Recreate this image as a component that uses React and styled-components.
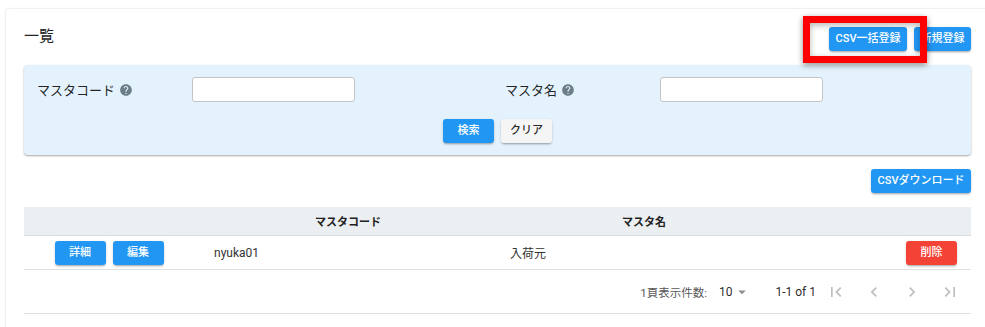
import React from 'react';
import styled, { createGlobalStyle } from 'styled-components';
import {
  MdHelp,
  MdArrowDropDown,
  MdFirstPage,
  MdLastPage,
  MdChevronLeft,
  MdChevronRight
} from 'react-icons/md';

const GlobalStyle = createGlobalStyle`
  html, body {
    margin: 0;
    padding: 0;
    background: #fff;
    overflow: hidden;
  }
  body {
    font-family: Roboto, "Noto Sans CJK JP", sans-serif;
    color: rgba(0, 0, 0, 0.87);
  }
`;

const Card = styled.div`
  margin: 8px 0 0 5px;
  width: 985px;
  min-height: 330px;
  box-sizing: border-box;
  padding: 18px 18px 14px;
  border: 1px solid #f0f0f0;
  border-radius: 4px;
  box-shadow: 0 0 2px rgba(0, 0, 0, 0.06);
  background: #fff;
`;

const TitleRow = styled.div`
  display: flex;
  justify-content: space-between;
  align-items: flex-start;
  height: 24px;
`;

const Title = styled.h2`
  margin: 0;
  font-size: 15px;
  font-weight: 400;
  line-height: 18px;
  color: #222;
`;

const ButtonGroup = styled.div`
  position: relative;
  display: flex;
  gap: 7px;
`;

// red annotation frame drawn over the bulk-upload button
const Highlight = styled.div`
  position: absolute;
  left: -26px;
  top: -11px;
  width: 124px;
  height: 47px;
  box-sizing: border-box;
  border: 7px solid #ff0000;
  box-shadow: 0 2px 6px rgba(0, 0, 0, 0.45), inset 0 2px 6px rgba(0, 0, 0, 0.3);
  pointer-events: none;
`;

const Button = styled.button`
  height: 24px;
  min-width: 51px;
  padding: 0 6.5px;
  border: none;
  border-radius: 3px;
  font-family: Roboto, "Noto Sans CJK JP", sans-serif;
  font-size: 11px;
  font-weight: 500;
  line-height: 24px;
  white-space: nowrap;
  cursor: pointer;
  color: ${p => (p.$variant === 'light' ? 'rgba(0,0,0,0.87)' : '#fff')};
  background: ${p =>
    p.$variant === 'danger' ? '#f44336' : p.$variant === 'light' ? '#f5f5f5' : '#2196f3'};
  box-shadow: 0 2px 2px -1px rgba(0, 0, 0, 0.25), 0 1px 3px rgba(0, 0, 0, 0.15);
`;

const SearchPanel = styled.div`
  margin-top: 14px;
  padding: 12px 0 12px;
  background: #e3f2fd;
  border-radius: 4px;
  box-shadow: 0 1px 2px rgba(0, 0, 0, 0.35);
`;

const FieldGrid = styled.div`
  display: grid;
  grid-template-columns: 468px 1fr;
`;

const Field = styled.div`
  display: flex;
  align-items: center;
  padding-left: 13px;
`;

const Label = styled.div`
  width: 155px;
  display: flex;
  align-items: center;
  gap: 4px;
  font-size: 13px;
  color: rgba(0, 0, 0, 0.87);

  svg {
    color: #6b7d87;
  }
`;

const Input = styled.input`
  width: 163px;
  height: 25px;
  box-sizing: border-box;
  border: 1px solid #c4c4c4;
  border-radius: 3px;
  background: #fff;
  outline: none;
`;

const PanelActions = styled.div`
  margin-top: 17px;
  display: flex;
  justify-content: center;
  gap: 7px;
`;

const DownloadRow = styled.div`
  margin-top: 14px;
  display: flex;
  justify-content: flex-end;
`;

const Table = styled.div`
  margin-top: 14px;
`;

const cols = '176px 296px 296px 1fr';

const HeadRow = styled.div`
  display: grid;
  grid-template-columns: ${cols};
  height: 28px;
  align-items: center;
  background: #eceff1;
  border-bottom: 1px solid #dcdcdc;
  font-size: 11px;
  font-weight: 700;
  color: #222;
`;

const HeadCell = styled.div`
  text-align: center;
`;

const BodyRow = styled.div`
  display: grid;
  grid-template-columns: ${cols};
  height: 33px;
  align-items: center;
  border-bottom: 1px solid #e0e0e0;
  font-size: 12px;
  color: #333;
`;

const Cell = styled.div`
  display: flex;
  gap: 7px;
  padding: ${p => (p.$align === 'center' ? '0 14px 0 8px' : '0 14px')};
  justify-content: ${p => p.$align || 'flex-start'};
`;

const Footer = styled.div`
  height: 43px;
  display: flex;
  align-items: center;
  justify-content: flex-end;
  padding-right: 9px;
  border-bottom: 1px solid #e0e0e0;
  font-size: 12px;
  color: rgba(0, 0, 0, 0.7);
`;

const PerPageLabel = styled.div`
  font-size: 11.5px;
`;

const PerPage = styled.div`
  display: flex;
  align-items: center;
  margin-left: 12px;
  margin-right: 24px;
  color: rgba(0, 0, 0, 0.87);

  svg {
    color: rgba(0, 0, 0, 0.45);
    margin-left: 1px;
  }
`;

const PageInfo = styled.div`
  color: rgba(0, 0, 0, 0.87);
`;

const PageNav = styled.div`
  display: flex;
  gap: 14px;
  margin-left: 8px;
`;

const IconBtn = styled.span`
  width: 24px;
  display: flex;
  justify-content: center;
  color: rgba(0, 0, 0, 0.26);
`;

const rows = [{ code: 'nyuka01', name: '入荷元' }];

export default function App() {
  return (
    <>
      <GlobalStyle />
      <Card>
        <TitleRow>
          <Title>一覧</Title>
          <ButtonGroup>
            <Button>CSV一括登録</Button>
            <Button>新規登録</Button>
            <Highlight />
          </ButtonGroup>
        </TitleRow>

        <SearchPanel>
          <FieldGrid>
            <Field>
              <Label>
                マスタコード <MdHelp size={14} />
              </Label>
              <Input />
            </Field>
            <Field>
              <Label>
                マスタ名 <MdHelp size={14} />
              </Label>
              <Input />
            </Field>
          </FieldGrid>
          <PanelActions>
            <Button>検索</Button>
            <Button $variant="light">クリア</Button>
          </PanelActions>
        </SearchPanel>

        <DownloadRow>
          <Button>CSVダウンロード</Button>
        </DownloadRow>

        <Table>
          <HeadRow>
            <HeadCell />
            <HeadCell>マスタコード</HeadCell>
            <HeadCell>マスタ名</HeadCell>
            <HeadCell />
          </HeadRow>
          {rows.map(r => (
            <BodyRow key={r.code}>
              <Cell $align="center">
                <Button>詳細</Button>
                <Button>編集</Button>
              </Cell>
              <Cell>{r.code}</Cell>
              <Cell>{r.name}</Cell>
              <Cell $align="flex-end">
                <Button $variant="danger">削除</Button>
              </Cell>
            </BodyRow>
          ))}
          <Footer>
            <PerPageLabel>1頁表示件数:</PerPageLabel>
            <PerPage>
              10 <MdArrowDropDown size={18} />
            </PerPage>
            <PageInfo>1-1 of 1</PageInfo>
            <PageNav>
              <IconBtn>
                <MdFirstPage size={20} />
              </IconBtn>
              <IconBtn>
                <MdChevronLeft size={20} />
              </IconBtn>
              <IconBtn>
                <MdChevronRight size={20} />
              </IconBtn>
              <IconBtn>
                <MdLastPage size={20} />
              </IconBtn>
            </PageNav>
          </Footer>
        </Table>
      </Card>
    </>
  );
}
